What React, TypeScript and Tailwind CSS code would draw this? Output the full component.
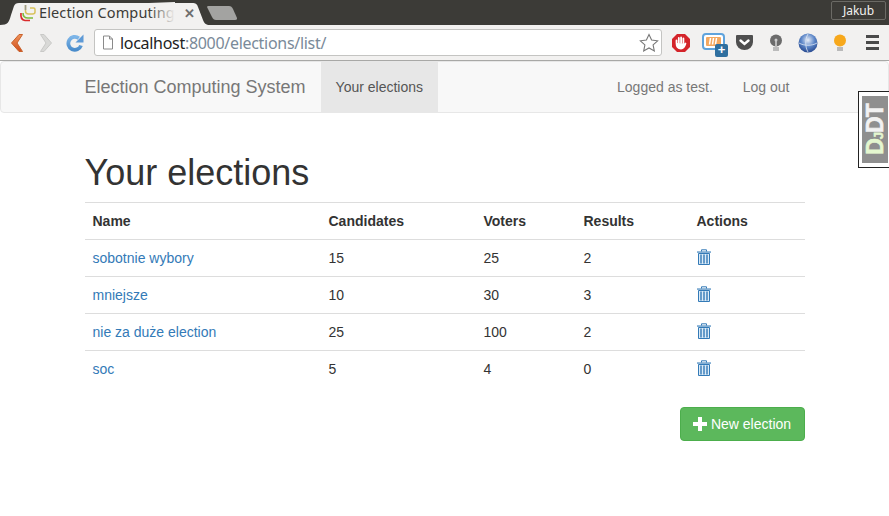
import React from "react";

function Trash() {
  return (
    <svg width="14" height="16" viewBox="0 0 14 16" className="block">
      <path d="M4.500 2.500V.8h5v1.700" fill="none" stroke="#337ab7" strokeWidth="1" />
      <rect x="0" y="2.500" width="14" height="1.100" fill="#337ab7" />
      <path d="M1.500 4.500h11V15.500h-11z" fill="#dcebf7" stroke="#337ab7" strokeWidth="1" />
      <path d="M4 5.500v9M7 5.500v9M10 5.500v9" stroke="#337ab7" strokeWidth="1.400" />
    </svg>
  );
}

const rows = [
  ["sobotnie wybory", "15", "25", "2"],
  ["mniejsze", "10", "30", "3"],
  ["nie za duże election", "25", "100", "2"],
  ["soc", "5", "4", "0"],
];

function TabBar() {
  return (
    <div className="relative h-[25px] bg-[#3c3b37] shrink-0">
      <svg width="240" height="25" className="absolute left-0 top-0">
        <path d="M0 25C8 25 9 22 11 15L14 6C15 4 16 3 19 3H192C196 3 197 4 198 7L203 20C204 23 206 25 210 25Z" fill="#f2f1f0" />
        <path d="M207 7C207 6 208 6 209 6H229C231 6 232 7 233 9L237 18C237 19 237 20 235 20H216C214 20 213 19 212 17Z" fill="#a3a3a1" />
      </svg>
      <div className="relative flex items-center h-full pt-[1px] pl-[19px]">
        <svg width="18" height="18" viewBox="0 0 18 18" className="shrink-0">
          <path d="M6.500 1v6c0 2 1 3 3 3h4c1.500 0 2.500-.5 2.500-2V5.500c0-1-.5-1.500-1.500-1.500H11" fill="none" stroke="#d8c25a" strokeWidth="1.500" />
          <path d="M6.500 1v5" fill="none" stroke="#9a9a8e" strokeWidth="1.500" />
          <path d="M4 9c0 3 2 5 5 5h5" fill="none" stroke="#7dbb3a" strokeWidth="1.600" />
          <path d="M2 9c-.5 4 1 7 4 7.500h5" fill="none" stroke="#d92b2b" strokeWidth="1.700" />
        </svg>
        <div className="relative w-[136px] ml-[2px] overflow-hidden whitespace-nowrap text-[14.5px] tracking-[0.12px] text-[#3c3b37] font-['Noto_Sans',sans-serif]">
          Election Computing
          <div className="absolute right-0 top-0 bottom-0 w-[26px] bg-gradient-to-r from-transparent to-[#f2f1f0]" />
        </div>
        <span className="ml-[9px] mt-[2px] text-[13px] font-bold text-[#6e6e6e] font-['Liberation_Sans',sans-serif]">✕</span>
      </div>
      <div className="absolute right-[3px] top-[1px] h-[19px] w-[55px] flex items-center justify-center border border-[#6b6a65] rounded-[2px] text-[12px] text-[#f2f1f0] font-['Noto_Sans',sans-serif]">Jakub</div>
    </div>
  );
}

function Toolbar() {
  return (
    <div className="h-[36px] shrink-0 bg-[#f2f1f0] border-b border-[#a8a8a6] flex items-center">
      <div className="flex items-center pl-[10px]">
        <svg width="14" height="20" viewBox="0 0 14 20">
          <defs>
            <linearGradient id="o" x1="0" y1="0" x2="0" y2="1">
              <stop offset="0" stopColor="#f0935a" />
              <stop offset="1" stopColor="#cf4f1e" />
            </linearGradient>
          </defs>
          <path d="M9 1.500h3.500L7 10l5.500 8.500H9L1.500 10z" fill="url(#o)" stroke="#c9622c" strokeWidth="1" strokeLinejoin="round" />
        </svg>
        <svg width="14" height="20" viewBox="0 0 14 20" className="ml-[15px]">
          <path d="M5 1.500H1.500L7 10l-5.500 8.500H5L12.500 10z" fill="#d9d9d7" stroke="#c9c9c7" strokeWidth="1" strokeLinejoin="round" />
        </svg>
        <svg width="18" height="18" viewBox="0 0 18 18" className="ml-[13px]">
          <defs>
            <linearGradient id="b" x1="0" y1="0" x2="0" y2="1">
              <stop offset="0" stopColor="#7db5e8" />
              <stop offset="1" stopColor="#4a8ccb" />
            </linearGradient>
          </defs>
          <path d="M15 11.500a6.500 6.500 0 1 1-2.200-7.300" fill="none" stroke="url(#b)" strokeWidth="3.800" />
          <path d="M17.500 .5v8h-8z" fill="#5e9ad6" />
        </svg>
      </div>
      <div className="ml-[10px] w-[568px] h-[27px] bg-white border border-[#c4c4c2] rounded-[3px] flex items-center pl-[7px] pr-[2px]">
        <svg width="12" height="15" viewBox="0 0 12 15" className="shrink-0">
          <path d="M1.500 1h6l3 3v10h-9z" fill="#fff" stroke="#8a8a8a" />
          <path d="M7.500 1v3h3" fill="none" stroke="#8a8a8a" />
        </svg>
        <div className="ml-[6px] flex-1 text-[16px] whitespace-nowrap font-['Noto_Sans',sans-serif] tracking-[-0.3px]">
          <span className="text-[#222]">localhost</span>
          <span className="text-[#7a8a99]">:8000/elections/list/</span>
        </div>
        <svg width="20" height="19" viewBox="0 0 20 19">
          <path d="M10 1.500l2.600 5.600 6 .7-4.500 4.100 1.200 6L10 15l-5.300 2.900 1.200-6L1.400 7.800l6-.7z" fill="#fff" stroke="#777" strokeWidth="1.100" />
        </svg>
      </div>
      <div className="flex items-center ml-[9px]">
        <svg width="20" height="20" viewBox="0 0 20 20">
          <path d="M6 1h8l5 5v8l-5 5H6l-5-5V6z" fill="#d4242a" />
          <path d="M5.500 10V7.500M7.800 10V5M10.100 10V4.500M12.400 10V5.500M5.500 10c0 4 2 5.500 4.500 5.500s3.500-1.500 4.500-5" fill="#fff" stroke="#fff" strokeWidth="1.800" strokeLinecap="round" />
        </svg>
        <div className="relative w-[22px] h-[20px] ml-[11px]">
          <svg width="24" height="22" viewBox="0 0 24 22">
            <rect x="1" y="1" width="21" height="15" rx="3" fill="#fff" stroke="#5fa3dc" strokeWidth="2" />
            <rect x="4" y="4" width="15" height="9" rx="1" fill="#f3a860" />
            <path d="M8.500 5l-1 6.500M11.500 5l-1 6.500M14.500 5l-1 6.500" stroke="#fff" strokeWidth="1.500" />
          </svg>
          <div className="absolute right-[-4px] bottom-[-4px] w-[13px] h-[13px] rounded-[2px] bg-[#2f6f9f] text-white text-[13px] leading-[12px] font-bold text-center font-['Liberation_Sans',sans-serif]">+</div>
        </div>
        <svg width="19" height="17" viewBox="0 0 19 17" className="ml-[11px]">
          <path d="M2 1h15a1 1 0 0 1 1 1v6a8.500 8 0 0 1-17 0V2a1 1 0 0 1 1-1z" fill="#4f4f4f" />
          <path d="M5.500 6.500l4 3.500 4-3.500" fill="none" stroke="#fff" strokeWidth="2.400" strokeLinecap="round" />
        </svg>
        <svg width="14" height="18" viewBox="0 0 14 18" className="ml-[15px]">
          <circle cx="7" cy="6.500" r="6" fill="#6b6b6b" />
          <circle cx="7" cy="6" r="1.500" fill="#ccc" />
          <rect x="6.200" y="6" width="1.600" height="6" fill="#ccc" />
          <rect x="4" y="13" width="6" height="4" fill="#bbb" />
        </svg>
        <svg width="20" height="20" viewBox="0 0 20 20" className="ml-[15px]">
          <defs>
            <radialGradient id="g" cx="0.5" cy="0.35" r="0.7">
              <stop offset="0" stopColor="#e8eef8" />
              <stop offset="0.5" stopColor="#5d87c8" />
              <stop offset="1" stopColor="#1f3f86" />
            </radialGradient>
          </defs>
          <circle cx="10" cy="10" r="9.500" fill="url(#g)" />
          <path d="M1 10c5 3 13 3 18 0M10 1c-3 5-3 13 0 18" fill="none" stroke="#dfe8f4" strokeWidth="0.800" />
        </svg>
        <svg width="14" height="18" viewBox="0 0 14 18" className="ml-[15px]">
          <circle cx="7" cy="6.500" r="6" fill="#f7a81b" />
          <rect x="4" y="13" width="6" height="4" fill="#b9b9b9" />
        </svg>
        <div className="ml-[19px] w-[13px] flex flex-col gap-[3px]">
          <div className="h-[3px] bg-[#4a4a4a]" />
          <div className="h-[3px] bg-[#4a4a4a]" />
          <div className="h-[3px] bg-[#4a4a4a]" />
        </div>
      </div>
    </div>
  );
}

export default function App() {
  return (
    <div className="relative w-[889px] h-[516px] overflow-hidden bg-white flex flex-col font-['Liberation_Sans',Arial,sans-serif] text-[14px] text-[#333]">
      <TabBar />
      <Toolbar />
      <nav className="h-[52px] shrink-0 bg-[#f8f8f8] border border-[#e7e7e7] rounded-[4px] flex items-stretch pl-[83.5px] pr-[83.5px]">
        <div className="flex items-center text-[18px] text-[#777] pr-[15px]">Election Computing System</div>
        <div className="flex items-center px-[15px] bg-[#e7e7e7] text-[#555]">Your elections</div>
        <div className="ml-auto flex items-center pr-[15px] text-[#777]">Logged as test.</div>
        <div className="flex items-center px-[15px] text-[#777]">Log out</div>
      </nav>
      <main className="px-[84.5px] w-full">
        <h1 className="mt-[40px] mb-[9px] text-[36px] leading-[40px] font-normal text-[#333]">Your elections</h1>
        <table className="w-[720px] table-fixed border-collapse">
          <colgroup>
            <col className="w-[236px]" />
            <col className="w-[155px]" />
            <col className="w-[100px]" />
            <col className="w-[113px]" />
            <col className="w-[116px]" />
          </colgroup>
          <thead>
            <tr className="border-t border-b border-[#ddd] h-[37px] text-left">
              <th className="px-[8px] font-bold">Name</th>
              <th className="px-[8px] font-bold">Candidates</th>
              <th className="px-[8px] font-bold">Voters</th>
              <th className="px-[8px] font-bold">Results</th>
              <th className="px-[8px] font-bold">Actions</th>
            </tr>
          </thead>
          <tbody>
            {rows.map((r, i) => (
              <tr key={r[0]} className={i === 0 ? "h-[37px]" : "h-[37px] border-t border-[#ddd]"}>
                <td className="px-[8px] text-[#337ab7]">{r[0]}</td>
                <td className="px-[8px]">{r[1]}</td>
                <td className="px-[8px]">{r[2]}</td>
                <td className="px-[8px]">{r[3]}</td>
                <td className="px-[8px] align-top pt-[9px]"><Trash /></td>
              </tr>
            ))}
          </tbody>
        </table>
        <div className="flex justify-end w-[720px] mt-[19px]">
          <div className="h-[34px] w-[125px] flex items-center justify-center gap-[4px] pt-[1px] bg-[#5cb85c] border border-[#4cae4c] rounded-[4px] text-white">
            <svg width="14" height="14" viewBox="0 0 14 14" className="-mt-[1px]">
              <path d="M5 0h4v5h5v4H9v5H5V9H0V5h5z" fill="#fff" />
            </svg>
            New election
          </div>
        </div>
      </main>
      <div className="absolute right-0 top-[91px] w-[31px] h-[77px] bg-white border border-[#222] border-r-0 pl-[3px] pr-[1px] py-[4px]">
        <div className="h-full w-full bg-[#8f8f8f] flex items-center justify-center overflow-hidden">
          <div className="-rotate-90 whitespace-nowrap font-bold text-[23px] leading-none tracking-[-1px] text-[#f2f2f2] [-webkit-text-stroke:0.6px]">
            <span className="text-[#e4f7cf]">D<span className="text-[13px]">J</span></span>DT
          </div>
        </div>
      </div>
    </div>
  );
}
